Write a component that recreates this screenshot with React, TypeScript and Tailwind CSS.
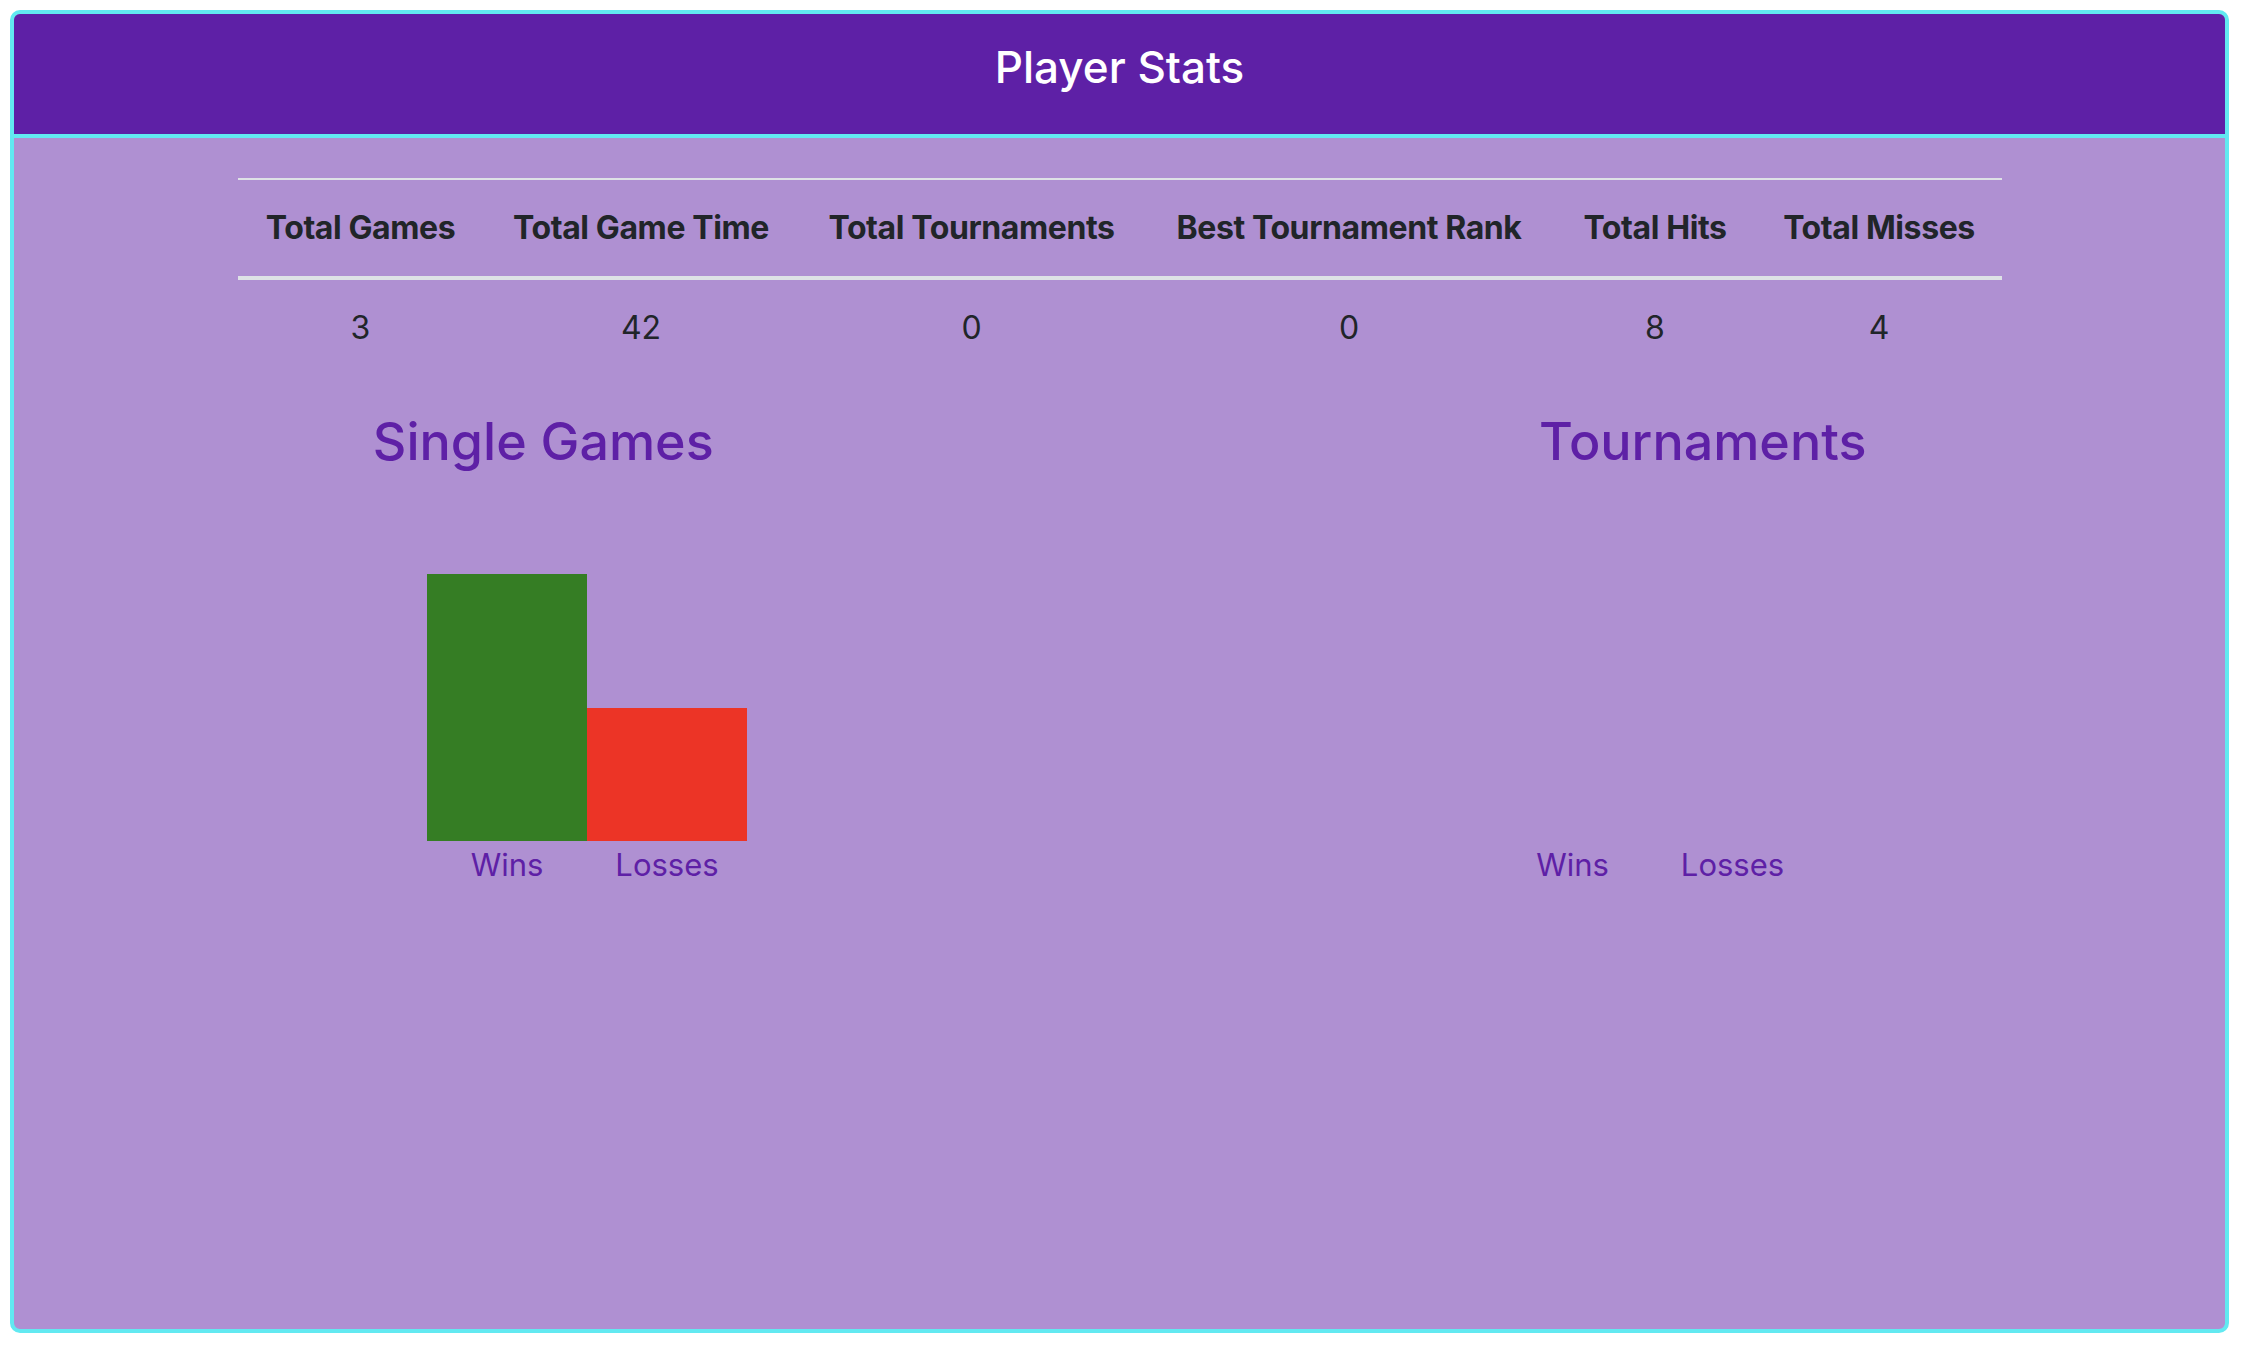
import React from 'react'

const headers = ['Total Games', 'Total Game Time', 'Total Tournaments', 'Best Tournament Rank', 'Total Hits', 'Total Misses']
const values = [3, 42, 0, 0, 8, 4]

function BarChart({ wins, losses, offset }: { wins: number; losses: number; offset: string }) {
  // px per game
  const unit = 133.5
  return (
    <div className={offset}>
      <div className="flex h-[366px] items-end">
        <div className="w-[160px] bg-[#357D24]" style={{ height: wins * unit }} />
        <div className="w-[160px] bg-[#EC3426]" style={{ height: losses * unit }} />
      </div>
      <div className="flex text-[31px] leading-[48px] text-[#5E20A6]">
        <div className="w-[160px] text-center">Wins</div>
        <div className="w-[160px] text-center">Losses</div>
      </div>
    </div>
  )
}

export default function App() {
  return (
    <div className="min-h-[1350px] bg-white pt-[10px] pl-[10px] font-['Inter',sans-serif]">
      <div className="flex h-[1323px] w-[2219px] flex-col overflow-hidden rounded-[10px] border-4 border-[#62E9F1] bg-[#AF90D2]">
        <div className="flex h-[124px] items-center justify-center border-b-4 border-[#62E9F1] bg-[#5E20A6] pb-[14px]">
          <h1 className="text-[44px] font-medium text-white">Player Stats</h1>
        </div>

        <div className="mx-auto mt-[40px] w-[1764px] text-[#212529]">
          <div className="grid grid-cols-[246px_315px_346px_409px_203px_245px] border-t-2 border-b-4 border-[#dee2e6]">
            {headers.map((h) => (
              <div key={h} className="h-[96px] text-center text-[32px] font-bold leading-[96px] tracking-[-0.4px]">{h}</div>
            ))}
          </div>
          <div className="grid grid-cols-[246px_315px_346px_409px_203px_245px]">
            {values.map((v, i) => (
              <div key={i} className="h-[96px] text-center text-[32px] leading-[96px]">{v}</div>
            ))}
          </div>
        </div>

        <div className="mt-[32px] grid grid-cols-2">
          <div>
            <h2 className="pr-[47px] text-center text-[52px] font-medium leading-[67px] text-[#5E20A6]">Single Games</h2>
            <BarChart wins={2} losses={1} offset="ml-[413px]" />
          </div>
          <div>
            <h2 className="pl-[61px] text-center text-[52px] font-medium leading-[67px] text-[#5E20A6]">Tournaments</h2>
            <BarChart wins={0} losses={0} offset="ml-[373px]" />
          </div>
        </div>
      </div>
    </div>
  )
}
